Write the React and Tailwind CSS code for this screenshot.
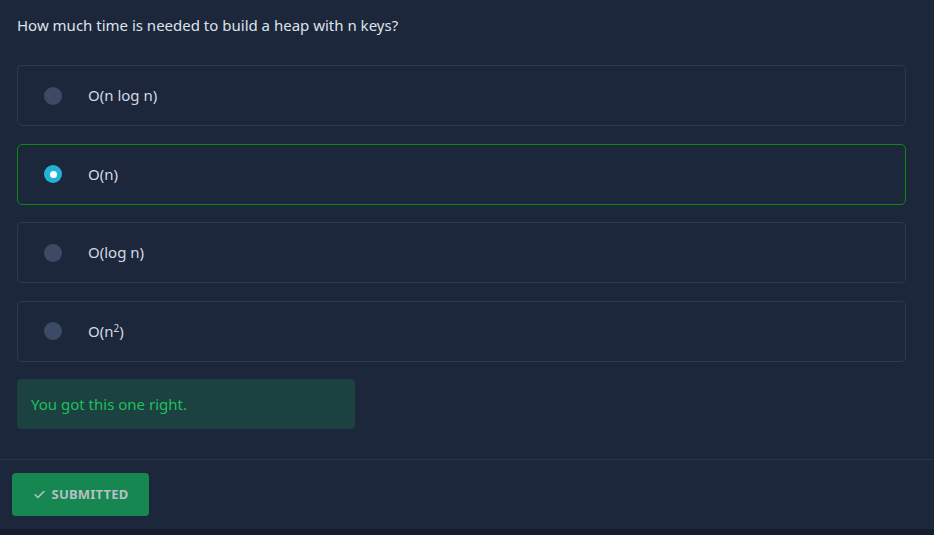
import React from 'react';

const options = [
  { id: 'a', label: 'O(n log n)' },
  { id: 'b', label: 'O(n)' },
  { id: 'c', label: 'O(log n)' },
  { id: 'd', label: 'O(n', sup: '2', after: ')' },
];

const Option = ({ option, selected }) => (
  <div
    className={`flex items-center h-[61px] rounded-[5px] border ${
      selected ? 'border-[#0b8a0b]' : 'border-[#2d3a55]'
    }`}
  >
    <div className="w-[70px] flex justify-center">
      {selected ? (
        <span className="w-[18px] h-[18px] rounded-full bg-[#22b2d6] flex items-center justify-center">
          <span className="w-[7px] h-[7px] rounded-full bg-white"></span>
        </span>
      ) : (
        <span className="w-[18px] h-[18px] rounded-full bg-[#3d4a66]"></span>
      )}
    </div>
    <span className="text-[15px] text-[#d3d9e2]">
      {option.label}
      {option.sup && <sup className="text-[10px]">{option.sup}</sup>}
      {option.after}
    </span>
  </div>
);

export default function App() {
  const selectedId = 'b';

  return (
    <div className="w-[934px] h-[535px] bg-[#1d273b] flex flex-col font-['Noto_Sans',sans-serif]">
      <div className="px-[17px] pt-[14px] pr-[28px]">
        <p className="text-[15px] text-[#dde3ea] leading-[22px]">
          How much time is needed to build a heap with n keys?
        </p>
        <div className="mt-[29px] flex flex-col gap-[17.5px]">
          {options.map((o) => (
            <Option key={o.id} option={o} selected={o.id === selectedId} />
          ))}
        </div>
        <div className="mt-[17.5px] w-[338px] h-[50px] rounded-[4px] bg-[#1b4240] flex items-center px-[14px]">
          <span className="text-[15px] text-[#1fbf5f]">You got this one right.</span>
        </div>
      </div>
      <div className="mt-[30px] border-t border-[#28334a] px-[12px] pt-[13px] h-[70px]">
        <button className="h-[43px] w-[137px] rounded-[4px] bg-[#178751] flex items-center justify-center gap-[6px] text-[13px] font-bold text-[#b4c0c6] tracking-[0.2px]">
          <svg width="13" height="13" viewBox="0 0 24 24" fill="none" stroke="currentColor" strokeWidth="3" strokeLinecap="round" strokeLinejoin="round">
            <path d="M4 12.5l5 5L20 6.5" />
          </svg>
          SUBMITTED
        </button>
      </div>
      <div className="flex-1 bg-[#151c2b]"></div>
    </div>
  );
}
